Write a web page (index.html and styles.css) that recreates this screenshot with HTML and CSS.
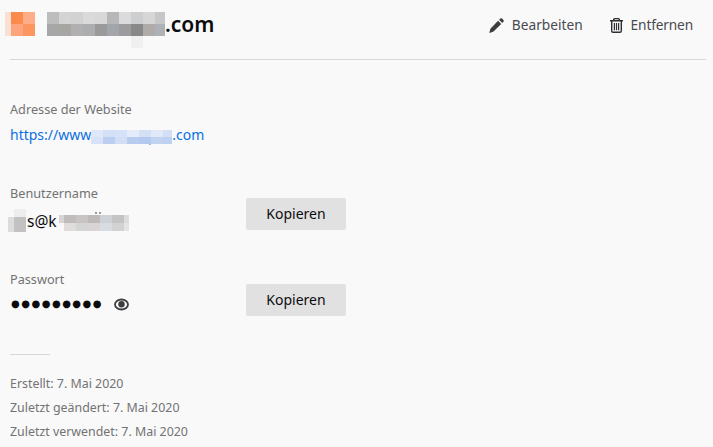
FILE: index.html
```html
<!DOCTYPE html>
<html lang="de">
<head>
<meta charset="utf-8">
<title>Login</title>
<link rel="stylesheet" href="styles.css">
</head>
<body>
<header class="head">
  <div class="brand">
    <svg class="favicon" width="30" height="24" viewBox="0 0 30 24"><rect width="6" height="24" fill="#f9e0d2"/><rect x="6" width="12" height="12" fill="#fb8b4c"/><rect x="18" width="12" height="12" fill="#fdae88"/><rect x="6" y="12" width="12" height="12" fill="#fda47c"/><rect x="18" y="12" width="12" height="12" fill="#fc9660"/></svg>
    <h1 class="title"><svg class="mosaic" width="118" height="36" viewBox="0 0 118 36"><g><rect x="0" width="12" height="12" fill="#bdbdbd"/><rect x="12" width="12" height="12" fill="#d4d4d4"/><rect x="24" width="12" height="12" fill="#d2d2d2"/><rect x="36" width="12" height="12" fill="#dadada"/><rect x="48" width="12" height="12" fill="#d8d8d8"/><rect x="60" width="12" height="12" fill="#b5b7b9"/><rect x="72" width="12" height="12" fill="#dbdbdb"/><rect x="84" width="12" height="12" fill="#ccced0"/><rect x="96" width="12" height="12" fill="#d6d6d6"/><rect x="108" width="10" height="12" fill="#c5c7c9"/></g><g transform="translate(0 12)"><rect x="0" width="12" height="12" fill="#a7a7a7"/><rect x="12" width="12" height="12" fill="#a8a6a3"/><rect x="24" width="12" height="12" fill="#b1afaf"/><rect x="36" width="12" height="12" fill="#abadaf"/><rect x="48" width="12" height="12" fill="#9a9a9a"/><rect x="60" width="12" height="12" fill="#a2a5aa"/><rect x="72" width="12" height="12" fill="#9c9c9e"/><rect x="84" width="12" height="12" fill="#888888"/><rect x="96" width="12" height="12" fill="#afaba8"/><rect x="108" width="10" height="12" fill="#aeb2b6"/></g><rect x="84" y="24" width="12" height="12" fill="#f0f0f0"/></svg><span>.com</span></h1>
  </div>
  <nav class="actions">
    <a class="action action-edit">
      <svg width="15" height="15" viewBox="0 0 15 15"><path fill="#3d3d40" d="M11.300.6a1.300 1.300 0 0 1 1.800 0l1.300 1.300a1.300 1.300 0 0 1 0 1.800l-1.200 1.200-3.100-3.100zM9.100 2.800l3.100 3.100-7.700 7.700L.6 15l-.2-.4 1-3.900z"/></svg>
      <span>Bearbeiten</span>
    </a>
    <a class="action action-remove">
      <svg width="13" height="15" viewBox="0 0 13 15"><path fill="#2f2f32" d="M4.500 0h4A1.500 1.500 0 0 1 10 1.500V2h3v1.400h-1V13a2 2 0 0 1-2 2H3a2 2 0 0 1-2-2V3.400H0V2h3v-.5A1.500 1.500 0 0 1 4.500 0zm0 1.300V2h4v-.7zM2.400 3.400V13a.6.6 0 0 0 .6.6h7a.6.6 0 0 0 .6-.6V3.400zM3.800 5h1.200v7.200H3.800zm2.100 0h1.200v7.200H5.900zm2.100 0h1.200v7.200H8z"/></svg>
      <span>Entfernen</span>
    </a>
  </nav>
</header>
<main class="details">
  <section class="field field-site">
    <div class="label">Adresse der Website</div>
    <a class="value link">https://www<svg class="mosaic-link" width="81" height="16" viewBox="0 0 81 16"><rect width="12" height="7" fill="#dfe8f8"/><rect x="12" width="12" height="7" fill="#d3e0f6"/><rect x="24" width="12" height="7" fill="#d6e2f7"/><rect x="36" width="12" height="7" fill="#e4ebf9"/><rect x="48" width="12" height="7" fill="#d3e0f6"/><rect x="60" width="12" height="7" fill="#e0e9f8"/><rect x="72" width="9" height="7" fill="#d3dff5"/><rect y="7" width="12" height="7" fill="#d8e3f7"/><rect x="12" y="7" width="12" height="7" fill="#bccff0"/><rect x="24" y="7" width="12" height="7" fill="#d1def5"/><rect x="36" y="7" width="12" height="7" fill="#b8ccf0"/><rect x="48" y="7" width="12" height="7" fill="#b4c9ef"/><rect x="60" y="7" width="12" height="7" fill="#c2d3f2"/><rect x="72" y="7" width="9" height="7" fill="#bfd1f1"/><rect x="58" y="14" width="2" height="1" fill="#8fbdf5"/></svg>.com</a>
  </section>
  <section class="field field-row">
    <div class="col">
      <div class="label">Benutzername</div>
      <div class="value user"><svg class="mosaic-left" width="18" height="23" viewBox="0 0 18 23"><rect x="6" width="12" height="8" fill="#ededed"/><rect y="8" width="6" height="15" fill="#dcdcdc"/><rect x="6" y="8" width="12" height="15" fill="#c2c2c2"/></svg><span class="user-text">s@k</span><svg class="mosaic-right" width="70" height="19" viewBox="0 0 70 19"><rect x="36" width="2" height="2" fill="#9a9a9a"/><rect x="40" width="2" height="2" fill="#9a9a9a"/><g transform="translate(0 3)"><rect width="5" height="8" fill="#d8d4d4"/><rect x="5" width="12" height="8" fill="#c0bcbc"/><rect x="17" width="12" height="8" fill="#c8c4c4"/><rect x="29" width="12" height="8" fill="#bfbaba"/><rect x="41" width="12" height="8" fill="#ced2d6"/><rect x="53" width="12" height="8" fill="#c4c4c4"/><rect x="65" width="5" height="8" fill="#dcdcdc"/><rect x="5" y="8" width="12" height="8" fill="#e0dcdc"/><rect x="17" y="8" width="12" height="8" fill="#d4d4d4"/><rect x="29" y="8" width="12" height="8" fill="#dad4d4"/><rect x="41" y="8" width="12" height="8" fill="#d8dce0"/><rect x="53" y="8" width="12" height="8" fill="#d2d2d2"/><rect x="65" y="8" width="5" height="8" fill="#e4e4e4"/></g></svg></div>
    </div>
    <button class="copy">Kopieren</button>
  </section>
  <section class="field field-row field-pass">
    <div class="col">
      <div class="label">Passwort</div>
      <div class="value pass"><span class="dots">●●●●●●●●●</span><svg class="eye" width="15" height="13" viewBox="0 0 15 13"><ellipse cx="7.500" cy="6.500" rx="6.500" ry="5" fill="none" stroke="#3d3d40" stroke-width="1.800"/><circle cx="7.500" cy="6.200" r="3.200" fill="#3d3d40"/></svg></div>
    </div>
    <button class="copy">Kopieren</button>
  </section>
  <hr class="rule">
  <footer class="meta">
    <div>Erstellt: 7. Mai 2020</div>
    <div>Zuletzt geändert: 7. Mai 2020</div>
    <div>Zuletzt verwendet: 7. Mai 2020</div>
  </footer>
</main>
</body>
</html>
```
FILE: styles.css
```css
* { box-sizing: border-box; }
html, body { height: 100%; }
body {
  margin: 0;
  padding: 0 7px 0 10px;
  background: #f9f9fa;
  color: #0c0c0d;
  font-family: "Noto Sans", "Open Sans", sans-serif;
  overflow: hidden;
}
.head {
  height: 60px;
  border-bottom: 1px solid #d7d7db;
  display: flex;
  justify-content: space-between;
  align-items: flex-start;
  padding-right: 13px;
}
.brand { display: flex; margin-left: -5px; padding-top: 12px; }
.favicon { display: block; }
.title {
  margin: 0 0 0 12px;
  font-size: 21px;
  line-height: 24px;
  font-weight: 600;
  display: flex;
  align-items: flex-start;
}
.mosaic { display: block; }
.actions { display: flex; gap: 27px; padding-top: 15px; }
.action {
  display: flex;
  align-items: center;
  gap: 8px;
  font-size: 13.7px;
  line-height: 20px;
  color: #4a4a4f;
}
.action svg { display: block; }
.action-remove span { letter-spacing: -0.15px; }
.details { display: flex; flex-direction: column; }
.field-site { padding-top: 40px; height: 124px; }
.field-row { display: flex; height: 86px; }
.field-pass { height: 84px; }
.col { width: 236px; }
.label { font-size: 12.7px; line-height: 18px; color: #737373; }
.value { font-size: 14px; line-height: 20px; margin-top: 6px; white-space: nowrap; display: flex; align-items: center; }
.user { margin-top: 9px; font-size: 15.5px; align-items: flex-start; }
.user-text { margin-left: 1px; }
.link { color: #0a70e0; }
.mosaic-link { display: block; flex: none; margin-top: 6px; }
.mosaic-left { display: block; flex: none; margin: -2px 0 0 -2px; }
.mosaic-right { display: block; flex: none; margin: 1px 0 0 2px; }
.copy {
  width: 100px;
  height: 32px;
  margin-top: 14px;
  border: 0;
  border-radius: 2px;
  background: #e1e1e2;
  color: #0c0c0d;
  font: 14px/20px "Noto Sans", "Open Sans", sans-serif;
  padding: 0;
}
.pass { gap: 11px; }
.dots { margin-left: 1px; font-family: "DejaVu Sans", sans-serif; font-size: 10px; letter-spacing: 1.5px; }
.eye { display: block; }
.rule { width: 40px; height: 1px; border: 0; background: #d7d7db; margin: 0; }
.meta { padding-top: 17px; font-size: 12.4px; line-height: 24px; color: #737373; }
```
